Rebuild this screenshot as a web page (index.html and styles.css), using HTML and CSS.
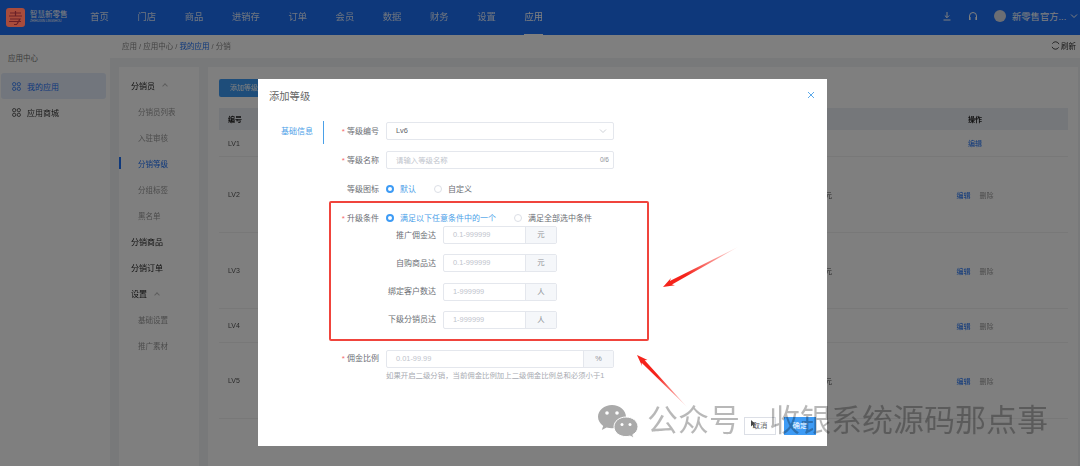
FILE: index.html
```html
<!DOCTYPE html>
<html lang="zh-CN">
<head>
    <meta charset="UTF-8">
    <meta name="viewport" content="width=device-width, initial-scale=1.0">
    <title>添加等级</title>
    <link rel="stylesheet" href="styles.css">
</head>
<body>
    <div class="app">
        <header class="topbar">
            <div class="logo">
                <svg class="logo-mark" viewBox="0 0 19 19">
                    <rect width="19" height="19" rx="3" fill="#a84c3c"/>
                    <path d="M4 5h11M9.500 3v5M3 8h13M4 11h10l-3 5M3 13.500h12M8 16.500h3" fill="none" stroke="#6a2028" stroke-width="1.200"/>
                </svg>
                <div class="logo-text">
                    <span class="logo-name">智慧新零售</span>
                    <span class="logo-sub">ZHIHUIXIN LINGSHOU</span>
                </div>
            </div>
            <nav class="nav">
                <a>首页</a><a>门店</a><a>商品</a><a>进销存</a><a>订单</a><a>会员</a><a>数据</a><a>财务</a><a>设置</a><a class="active">应用</a>
            </nav>
            <div class="top-right">
                <svg class="top-icon" viewBox="0 0 10 10"><path d="M5 1v5.500M2.800 4.500L5 6.700l2.200-2.200M1.500 9h7" fill="none" stroke="#fff" stroke-width="1"/></svg>
                <svg class="top-icon" viewBox="0 0 10 10"><path d="M1.500 8V5a3.500 3.500 0 0 1 7 0v3" fill="none" stroke="#fff" stroke-width="1"/><rect x="1" y="6" width="1.600" height="3" fill="#fff"/><rect x="7.400" y="6" width="1.600" height="3" fill="#fff"/></svg>
                <span class="avatar"></span>
                <span class="user">新零售官方...</span>
                <svg class="user-arrow" viewBox="0 0 8 8"><path d="M1 2.500l3 3 3-3" fill="none" stroke="#fff" stroke-width="1"/></svg>
            </div>
        </header>

        <div class="layout">
            <aside class="side">
                <div class="side-title">应用中心</div>
                <div class="side-item current">
                    <svg class="grid-icon" viewBox="0 0 10 10"><g fill="none" stroke="#1c70f7" stroke-width="0.900"><rect x="0.700" y="0.700" width="3.400" height="3.400" rx="1.300"/><rect x="5.900" y="0.700" width="3.400" height="3.400" rx="1.300"/><rect x="0.700" y="5.900" width="3.400" height="3.400" rx="1.300"/><rect x="5.900" y="5.900" width="3.400" height="3.400" rx="1.300"/></g></svg>
                    我的应用
                </div>
                <div class="side-item">
                    <svg class="grid-icon" viewBox="0 0 10 10"><g fill="none" stroke="#333" stroke-width="0.900"><rect x="0.700" y="0.700" width="3.400" height="3.400" rx="1.300"/><rect x="5.900" y="0.700" width="3.400" height="3.400" rx="1.300"/><rect x="0.700" y="5.900" width="3.400" height="3.400" rx="1.300"/><rect x="5.900" y="5.900" width="3.400" height="3.400" rx="1.300"/></g></svg>
                    应用商城
                </div>
            </aside>

            <main class="main">
                <div class="crumbs">
                    <span>应用 / 应用中心 / <b>我的应用</b> / 分销</span>
                    <span class="refresh">
                        <svg class="refresh-icon" viewBox="0 0 10 10"><path d="M8.800 3.500A4 4 0 0 0 1.500 3M1.200 6.500A4 4 0 0 0 8.500 7" fill="none" stroke="#222" stroke-width="0.900"/></svg>
                        刷新
                    </span>
                </div>
                <div class="content">
                    <div class="subnav">
                        <div class="sub-head">分销员 <i class="caret"></i></div>
                        <div class="sub-item">分销员列表</div>
                        <div class="sub-item">入驻审核</div>
                        <div class="sub-item on">分销等级</div>
                        <div class="sub-item">分组标签</div>
                        <div class="sub-item">黑名单</div>
                        <div class="sub-head">分销商品</div>
                        <div class="sub-head">分销订单</div>
                        <div class="sub-head">设置 <i class="caret"></i></div>
                        <div class="sub-item">基础设置</div>
                        <div class="sub-item">推广素材</div>
                    </div>
                    <div class="card">
                        <div class="add-btn">添加等级</div>
                        <div class="table">
                            <div class="t-row t-head"><span>编号</span><span class="cond"></span><span class="ops">操作</span></div>
                            <div class="t-row h27"><span>LV1</span><span class="cond"></span><span class="ops"><a>编辑</a></span></div>
                            <div class="t-row h76"><span>LV2</span><span class="cond">满足条件100元</span><span class="ops"><a>编辑</a><em>删除</em></span></div>
                            <div class="t-row h76"><span>LV3</span><span class="cond">满足条件500元</span><span class="ops"><a>编辑</a><em>删除</em></span></div>
                            <div class="t-row h34"><span>LV4</span><span class="cond"></span><span class="ops"><a>编辑</a><em>删除</em></span></div>
                            <div class="t-row h76"><span>LV5</span><span class="cond">满足条件900元</span><span class="ops"><a>编辑</a><em>删除</em></span></div>
                        </div>
                    </div>
                </div>
            </main>
        </div>

        <div class="overlay">
            <div class="modal">
                <div class="modal-head">
                    <span>添加等级</span>
                    <svg class="close" viewBox="0 0 8 8"><path d="M1 1l6 6M7 1L1 7" stroke="#4aa0e8" stroke-width="0.900"/></svg>
                </div>
                <div class="modal-body">
                    <div class="tabs"><div class="tab">基础信息</div></div>
                    <div class="form">
                        <div class="row">
                            <label class="req">等级编号</label>
                            <div class="input"><span class="val">Lv6</span>
                                <svg class="select-arrow" viewBox="0 0 8 8"><path d="M1 2.500l3 3 3-3" fill="none" stroke="#c0c4cc" stroke-width="0.800"/></svg>
                            </div>
                        </div>
                        <div class="row">
                            <label class="req">等级名称</label>
                            <div class="input"><span class="ph">请输入等级名称</span><span class="count">0/6</span></div>
                        </div>
                        <div class="row">
                            <label>等级图标</label>
                            <div class="radios">
                                <span class="radio on"><i></i>默认</span>
                                <span class="radio"><i></i>自定义</span>
                            </div>
                        </div>
                        <div class="row tight">
                            <label class="req">升级条件</label>
                            <div class="radios">
                                <span class="radio on"><i></i>满足以下任意条件中的一个</span>
                                <span class="radio"><i></i>满足全部选中条件</span>
                            </div>
                        </div>
                        <div class="conds">
                            <div class="cond-row"><label>推广佣金达</label><div class="input addon"><span class="ph">0.1-999999</span><span class="unit">元</span></div></div>
                            <div class="cond-row"><label>自购商品达</label><div class="input addon"><span class="ph">0.1-999999</span><span class="unit">元</span></div></div>
                            <div class="cond-row"><label>绑定客户数达</label><div class="input addon"><span class="ph">1-999999</span><span class="unit">人</span></div></div>
                            <div class="cond-row"><label>下级分销员达</label><div class="input addon"><span class="ph">1-999999</span><span class="unit">人</span></div></div>
                        </div>
                        <div class="row tight">
                            <label class="req">佣金比例</label>
                            <div class="input addon"><span class="ph">0.01-99.99</span><span class="unit">%</span></div>
                        </div>
                        <div class="hint">如果开启二级分销，当前佣金比例加上二级佣金比例总和必须小于1</div>
                    </div>
                </div>
                <div class="modal-foot">
                    <span class="btn">取消</span>
                    <span class="btn primary">确定</span>
                </div>
            </div>
        </div>

        <!-- annotations drawn on top of the screenshot -->
        <div class="red-box"></div>
        <svg class="arrows" viewBox="0 0 1080 466">
            <defs>
                <linearGradient id="fadeA" gradientUnits="userSpaceOnUse" x1="663" y1="287" x2="738" y2="247">
                    <stop offset="0.300" stop-color="#f5231b"/>
                    <stop offset="1" stop-color="#f5231b" stop-opacity="0.100"/>
                </linearGradient>
                <linearGradient id="fadeB" gradientUnits="userSpaceOnUse" x1="637" y1="355" x2="687" y2="407">
                    <stop offset="0.400" stop-color="#f5231b"/>
                    <stop offset="1" stop-color="#f5231b" stop-opacity="0.100"/>
                </linearGradient>
            </defs>
            <polygon points="663,287 675,285.200 672,284.600 738,247 669.800,281 671,278" fill="url(#fadeA)"/>
            <polygon points="637,355 647.500,360 644.700,360.300 687,407 641.600,362.800 642,366" fill="url(#fadeB)"/>
            <path d="M751 420v6.500l1.600-1.500 1.200 2.500 1-.5-1.200-2.400h2.200z" fill="#444"/>
        </svg>
        <div class="watermark">
            <svg class="wx" viewBox="0 0 40 34">
                <path d="M14 0C6.300 0 0 5.200 0 11.800c0 3.700 2 6.900 5.200 9.100L3.800 25l4.800-2.500c1.700.5 3.500.8 5.400.8 8 0 14-5 14-11.500S21.700 0 14 0z" fill="#aaa"/>
                <path d="M28 12c-6.700 0-12 4.300-12 9.800s5.300 9.800 12 9.800c1.400 0 2.700-.2 4-.6l3.800 2-1-3.300c3.200-1.800 5.200-4.700 5.200-7.900C40 16.300 34.700 12 28 12z" fill="#aaa" stroke="#fff" stroke-width="1"/>
                <circle cx="9" cy="8" r="1.800" fill="#fff"/><circle cx="19" cy="8" r="1.800" fill="#fff"/>
                <circle cx="24" cy="19.500" r="1.500" fill="#fff"/><circle cx="32" cy="19.500" r="1.500" fill="#fff"/>
            </svg>
            <span class="wm-text">公众号</span>
            <span class="wm-text wm-name">收银系统源码那点事</span>
        </div>
    </div>
</body>
</html>
```

FILE: styles.css
```css
* {
    box-sizing: border-box;
}
body {
    margin: 0;
    font-family: "Liberation Sans", "Noto Sans CJK SC", sans-serif;
    background: #f0f2f5;
}
.app {
    position: relative;
    width: 1080px;
    height: 466px;
    overflow: hidden;
    filter: blur(0.45px);
}

/* top bar */
.topbar {
    display: flex;
    align-items: center;
    height: 35px;
    background: #1c70f7;
    color: #fff;
}
.logo {
    display: flex;
    align-items: center;
    width: 76px;
    padding-left: 6px;
    gap: 5px;
}
.logo-mark {
    position: relative;
    z-index: 1;
    width: 19px;
    height: 19px;
}
.logo-text {
    display: flex;
    flex-direction: column;
    line-height: 6px;
}
.logo-name {
    font-size: 7.500px;
    white-space: nowrap;
}
.logo-sub {
    font-size: 3px;
    white-space: nowrap;
}
.nav {
    display: flex;
    height: 100%;
}
.nav a {
    display: flex;
    align-items: center;
    position: relative;
    padding: 0 14.300px 3px;
    font-size: 9.300px;
    color: rgba(255, 255, 255, 0.85);
}
.nav a.active {
    color: #fff;
}
.nav a.active::after {
    content: "";
    position: absolute;
    left: 14px;
    right: 14px;
    bottom: 0;
    height: 1px;
    background: #fff;
}
.top-right {
    display: flex;
    align-items: center;
    margin-left: auto;
    padding-bottom: 3px;
}
.top-icon {
    width: 10px;
    height: 10px;
    margin-right: 16px;
}
.avatar {
    width: 12px;
    height: 12px;
    border-radius: 50%;
    background: #d8dce6;
    margin-right: 6px;
}
.user {
    font-size: 9.300px;
    white-space: nowrap;
    width: 54px;
}
.user-arrow {
    width: 8px;
    height: 8px;
    margin: 0 2px 0 4px;
}

/* left side */
.layout {
    display: flex;
    height: 431px;
}
.side {
    width: 110px;
    background: #fff;
    padding: 0 4px 0 1px;
}
.side-title {
    font-size: 7.500px;
    color: #777;
    padding: 18px 0 0 7px;
    height: 38px;
    line-height: 11px;
}
.side-item {
    display: flex;
    align-items: center;
    height: 26px;
    padding-left: 11px;
    font-size: 8px;
    color: #333;
    gap: 6px;
    border-radius: 3px;
}
.side-item.current {
    background: #e4edfb;
    color: #1c70f7;
}
.grid-icon {
    width: 9px;
    height: 9px;
}
.main {
    flex: 1;
    display: flex;
    flex-direction: column;
    min-width: 0;
}
.crumbs {
    display: flex;
    justify-content: space-between;
    align-items: center;
    height: 23px;
    padding: 0 4px 2px 12px;
    background: #fff;
    font-size: 7.500px;
    color: #888;
}
.crumbs b {
    font-weight: 400;
    color: #1c70f7;
}
.refresh {
    display: flex;
    align-items: center;
    gap: 1px;
    color: #333;
}
.refresh-icon {
    width: 9px;
    height: 9px;
}
.content {
    flex: 1;
    display: flex;
    padding: 9px 2px 0 9px;
    gap: 9px;
}
.subnav {
    width: 80px;
    background: #fff;
    padding: 5px 0 0 12px;
}
.sub-head, .sub-item {
    display: flex;
    align-items: center;
    position: relative;
    height: 26.100px;
    font-size: 8px;
    color: #222;
}
.sub-item {
    padding-left: 7px;
    font-size: 7.500px;
    color: #999;
}
.sub-item.on {
    color: #1c70f7;
}
.sub-item.on::before {
    content: "";
    position: absolute;
    left: -12px;
    top: 7px;
    width: 2px;
    height: 12px;
    background: #1c70f7;
}
.caret {
    width: 4px;
    height: 4px;
    margin: 2px 0 0 8px;
    border-left: 1px solid #bbb;
    border-top: 1px solid #bbb;
    transform: rotate(45deg);
}
.card {
    flex: 1;
    background: #fff;
    padding: 12px 10px 0 11px;
    min-width: 0;
}
.add-btn {
    width: 50px;
    height: 18px;
    line-height: 18px;
    border-radius: 2px;
    background: #3d9bf5;
    color: #fff;
    font-size: 7px;
    text-align: center;
}
.table {
    margin-top: 11px;
    font-size: 7px;
    color: #555;
}
.t-row {
    display: grid;
    grid-template-columns: 120px 484px 1fr;
    align-items: center;
    padding-left: 9px;
    border-bottom: 1px solid #f0f0f0;
}
.t-head {
    height: 22px;
    background: #ebeef5;
    color: #222;
    font-weight: 700;
    border: 0;
}
.h27 { height: 27px; }
.h34 { height: 34px; }
.h76 { height: 76px; }
.cond {
    text-align: right;
}
.ops {
    display: flex;
    justify-content: center;
    gap: 9px;
    padding-left: 50px;
}
.ops a {
    color: #1c70f7;
}
.ops em {
    font-style: normal;
    color: #999;
}

/* dialog */
.overlay {
    position: absolute;
    inset: 0;
    background: rgba(0, 0, 0, 0.5);
    padding: 79px 0 0 258px;
}
.modal {
    display: flex;
    flex-direction: column;
    width: 569px;
    height: 367px;
    background: #fff;
}
.modal-head {
    display: flex;
    justify-content: space-between;
    height: 42px;
    padding: 10px 12px 0 11px;
    font-size: 10.300px;
    line-height: 16px;
    color: #666;
}
.close {
    width: 8px;
    height: 8px;
    margin-top: 2px;
}
.modal-body {
    flex: 1;
    display: flex;
}
.tabs {
    width: 66px;
}
.tab {
    height: 23px;
    line-height: 22px;
    padding-right: 10px;
    text-align: right;
    font-size: 8px;
    color: #4aa0e8;
    border-right: 1px solid #4aa0e8;
}
.form {
    padding-top: 1px;
    font-size: 8px;
}
.row {
    display: grid;
    grid-template-columns: 55px 228px;
    column-gap: 7px;
    align-items: center;
    height: 18px;
    margin-bottom: 11px;
    color: #6b6e74;
}
.row.tight {
    margin-bottom: 0;
}
.row label, .cond-row label {
    padding-bottom: 2px;
    text-align: right;
    white-space: nowrap;
}
.req::before {
    content: "* ";
    color: #f56c6c;
}
.input {
    display: flex;
    align-items: center;
    justify-content: space-between;
    height: 18px;
    padding-left: 9px;
    border: 1px solid #e4e7ed;
    border-radius: 2px;
    font-size: 7.400px;
}
.input span {
    margin-top: -1px;
}
.val {
    color: #606266;
}
.ph {
    color: #c0c4cc;
}
.count {
    padding-right: 4px;
    font-size: 6.500px;
    color: #909399;
}
.select-arrow {
    width: 8px;
    height: 8px;
    margin-right: 6px;
}
.addon {
    padding-right: 0;
    overflow: hidden;
}
.input .unit {
    flex-shrink: 0;
    width: 30px;
    height: 100%;
    margin-top: 0;
    line-height: 16px;
    text-align: center;
    background: #f5f7fa;
    border-left: 1px solid #e4e7ed;
    color: #909399;
}
.radios {
    display: flex;
    padding-bottom: 2px;
    white-space: nowrap;
}
.radio {
    display: flex;
    align-items: center;
    margin-right: 18px;
    color: #6b6e74;
}
.radio i {
    width: 8px;
    height: 8px;
    margin-top: 1px;
    margin-right: 6px;
    border: 1px solid #dcdfe6;
    border-radius: 50%;
}
.radio.on {
    color: #4aa0e8;
}
.radio.on i {
    border: 2.500px solid #3d9bf5;
}
.conds {
    margin: -1px 0 21px 55px;
    padding-left: 7px;
}
.cond-row {
    display: grid;
    grid-template-columns: 50px 114px;
    column-gap: 7px;
    align-items: center;
    height: 18px;
    margin-bottom: 10.330px;
    color: #6b6e74;
}
.cond-row:last-child {
    margin-bottom: 0;
}
.cond-row .input .unit {
    width: 31px;
}
.hint {
    margin: 2px 0 0 62px;
    font-size: 7.400px;
    line-height: 11px;
    color: #a8abb2;
    white-space: nowrap;
}
.modal-foot {
    display: flex;
    justify-content: flex-end;
    gap: 8px;
    padding: 0 11px 11px 0;
}
.btn {
    width: 32px;
    height: 18px;
    line-height: 15px;
    text-align: center;
    font-size: 7.400px;
    color: #606266;
    border: 1px solid #dcdfe6;
}
.btn.primary {
    background: #3d9bf5;
    border-color: #3d9bf5;
    color: #fff;
}

/* annotations */
.red-box {
    position: absolute;
    left: 329px;
    top: 201px;
    width: 320px;
    height: 140px;
    border: 2px solid #f0443c;
    border-radius: 2px;
}
.arrows {
    position: absolute;
    inset: 0;
    width: 1080px;
    height: 466px;
}
.watermark {
    position: absolute;
    left: 598px;
    top: 402px;
    display: flex;
    align-items: center;
    height: 38px;
    white-space: nowrap;
}
.wx {
    width: 40px;
    height: 34px;
    margin: 2px 9px 0 0;
}
.wm-text {
    font-size: 31px;
    line-height: 38px;
    color: rgba(0, 0, 0, 0.28);
}
.wm-name {
    margin-left: 29px;
}
```
